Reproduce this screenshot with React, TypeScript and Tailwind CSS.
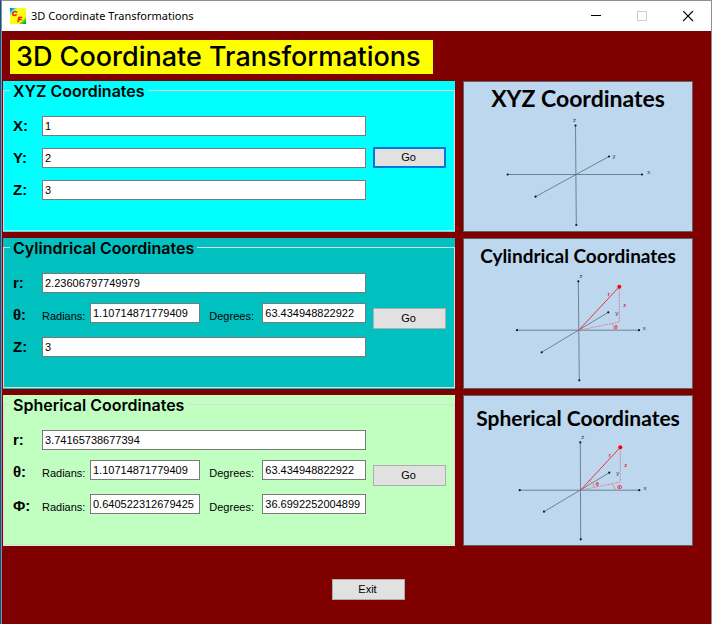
import { useId, useState } from 'react';
import type { ReactNode } from 'react';
import clsx from 'clsx';

type Point = [number, number];

interface ButtonProps {
  children: ReactNode;
  focused?: boolean;
  className?: string;
  onClick?: () => void;
}

function Button({ children, focused = false, className, onClick }: ButtonProps) {
  return (
    <button
      type="button"
      onClick={onClick}
      className={clsx(
        'h-[21px] w-[73px] shrink-0 bg-[#e1e1e1] pr-0.5 text-[11px] leading-none',
        focused ? 'border-2 border-[#0078d7]' : 'border border-[#adadad]',
        className
      )}
    >
      {children}
    </button>
  );
}

interface FieldProps {
  label: string;
  value: string;
  onChange: (value: string) => void;
}

const inputClass = 'h-5 min-w-0 border border-[#7a7a7a] bg-white px-0.5 pb-px text-[11px] leading-none outline-none';
const nameClass = 'w-[29px] shrink-0 text-[15px] leading-5 font-bold';

/** Bold axis name followed by one full-width box. */
function Field({ label, value, onChange }: FieldProps) {
  const id = useId();
  return (
    <div className="flex items-center">
      <label htmlFor={id} className={nameClass}>
        {label}
      </label>
      <input id={id} className={clsx(inputClass, 'flex-1')} value={value} onChange={(e) => onChange(e.target.value)} />
    </div>
  );
}

interface AngleProps {
  label: string;
  radians: string;
  degrees: string;
}

/** Angle row, shown both in radians and in degrees. */
function AngleField({ label, radians, degrees }: AngleProps) {
  const id = useId();
  const [rad, setRad] = useState(radians);
  const [deg, setDeg] = useState(degrees);

  return (
    <div className="flex h-6 items-center text-[11px]">
      <span className={nameClass}>{label}</span>
      <label htmlFor={`${id}-rad`} className="w-12 shrink-0 pt-0.5">
        Radians:
      </label>
      <input
        id={`${id}-rad`}
        className={clsx(inputClass, 'flex-[110] self-start')}
        value={rad}
        onChange={(e) => setRad(e.target.value)}
      />
      <label htmlFor={`${id}-deg`} className="ml-[9px] w-[53px] shrink-0 pt-0.5">
        Degrees:
      </label>
      <input
        id={`${id}-deg`}
        className={clsx(inputClass, 'flex-[103] self-start')}
        value={deg}
        onChange={(e) => setDeg(e.target.value)}
      />
    </div>
  );
}

interface PanelProps {
  title: string;
  color: string;
  children: ReactNode;
  action: ReactNode;
  gap: string;
}

function Panel({ title, color, children, action, gap }: PanelProps) {
  return (
    <section className={clsx('pb-px', color)}>
      <fieldset className="h-[150px] min-w-0 border border-[#dcdcdc] pr-2 pl-[9px]">
        <legend className="-ml-[3px] px-[3px] pt-0.5 font-['Inter',sans-serif] text-[16px] leading-[17px] font-semibold">
          {title}
        </legend>
        <div className="flex items-start gap-[7px] pt-4">
          <div className={clsx('flex min-w-0 flex-1 flex-col', gap)}>{children}</div>
          {action}
        </div>
      </fieldset>
    </section>
  );
}

interface DiagramProps {
  title: string;
  titleClass: string;
  children: ReactNode;
}

function Diagram({ title, titleClass, children }: DiagramProps) {
  return (
    <figure className="flex h-[151px] flex-col border border-[#5f6468] bg-[#bdd7ee]">
      <figcaption
        className={clsx("h-[35px] text-center font-['Lato',sans-serif] font-bold whitespace-nowrap", titleClass)}
      >
        {title}
      </figcaption>
      <svg viewBox="0 35 228 114" className="min-h-0 flex-1" fontFamily="Liberation Sans, sans-serif" fontSize="6">
        {children}
      </svg>
    </figure>
  );
}

function Axis({ from, to }: { from: Point; to: Point }) {
  return (
    <g>
      <line x1={from[0]} y1={from[1]} x2={to[0]} y2={to[1]} stroke="#5c6c78" strokeWidth="0.8" />
      <circle cx={from[0]} cy={from[1]} r="1.1" fill="#101418" />
      <circle cx={to[0]} cy={to[1]} r="1.1" fill="#101418" />
    </g>
  );
}

function Mark({ at, red = false, children }: { at: Point; red?: boolean; children: string }) {
  return (
    <text x={at[0]} y={at[1] + 2} textAnchor="middle" fill={red ? '#e8303c' : '#28323a'} fontWeight={red ? 700 : 400}>
      {children}
    </text>
  );
}

/** Radius line to the point, with its dashed projection onto the xy plane. */
function Vector({ origin, tip, foot }: { origin: Point; tip: Point; foot: Point }) {
  return (
    <g fill="none">
      <line x1={origin[0]} y1={origin[1]} x2={tip[0]} y2={tip[1]} stroke="#f0303a" strokeWidth="1" />
      <path
        d={`M${origin[0]} ${origin[1]}L${foot[0]} ${foot[1]}L${tip[0]} ${tip[1]}`}
        stroke="#e07484"
        strokeWidth="0.8"
        strokeDasharray="2 0.8"
      />
      <circle cx={tip[0]} cy={tip[1]} r="2" fill="#f00" />
    </g>
  );
}

function AppIcon() {
  return (
    <svg width="16" height="16" viewBox="0 0 16 16" aria-hidden="true">
      <defs>
        <linearGradient id="icon-bg" x1="0" y1="0" x2="1" y2="1">
          <stop offset="0" stopColor="#0040e0" />
          <stop offset="0.1" stopColor="#10a0f0" />
          <stop offset="0.19" stopColor="#70f0b0" />
          <stop offset="0.27" stopColor="#ffff20" />
          <stop offset="0.76" stopColor="#fff800" />
          <stop offset="0.84" stopColor="#50d020" />
          <stop offset="1" stopColor="#008838" />
        </linearGradient>
      </defs>
      <rect width="16" height="16" fill="url(#icon-bg)" />
      <g
        fill="#f01010"
        stroke="#f01010"
        strokeWidth="0.5"
        fontFamily="Liberation Sans, sans-serif"
        fontWeight="700"
        fontStyle="italic"
        fontSize="7"
      >
        <text x="2" y="7.5">
          C
        </text>
        <text x="7.5" y="14">
          F
        </text>
      </g>
    </svg>
  );
}

function TitleBar() {
  return (
    <header className="flex h-[30px] items-center bg-white pl-2">
      <AppIcon />
      <span className="ml-[5px] flex-1 truncate font-['Noto_Sans',sans-serif] text-[11px]">
        3D Coordinate Transformations
      </span>
      <button type="button" aria-label="Minimize" className="grid h-full w-[45px] place-items-center">
        <svg width="11" height="11" stroke="#000" shapeRendering="crispEdges">
          <path d="M0 4.5H10" />
        </svg>
      </button>
      <button type="button" aria-label="Maximize" disabled className="grid h-full w-[46px] place-items-center">
        <svg width="10" height="10" fill="none" stroke="#ccc" shapeRendering="crispEdges">
          <path d="M.5 .5h9v9h-9z" />
        </svg>
      </button>
      <button type="button" aria-label="Close" className="grid h-full w-[46px] place-items-center">
        <svg width="11" height="11" stroke="#000" strokeWidth="1.2">
          <path d="M0 0l10 10M10 0l-10 10" />
        </svg>
      </button>
    </header>
  );
}

export default function App() {
  const [xyz, setXyz] = useState({ x: '1', y: '2', z: '3' });
  const [cylindrical, setCylindrical] = useState({ r: '2.23606797749979', z: '3' });
  const [radius, setRadius] = useState('3.74165738677394');

  return (
    <div className="min-h-screen border-l border-[#0f4f94] bg-[#800000] font-['Liberation_Sans',Arial,sans-serif] text-black">
      <div className="min-h-screen border-x border-t border-[#8f8f8f]">
        <TitleBar />

        <main className="pt-[9px] pb-6">
          <h1 className="ml-2 inline-block bg-[#ffff00] pr-3 pl-1.5 font-['Inter',sans-serif] text-[27px] leading-[34px] font-medium whitespace-nowrap">
            3D Coordinate Transformations
          </h1>

          <div className="mt-[7px] grid grid-cols-[minmax(0,1fr)_230px] gap-x-2 gap-y-1.5 pr-[18px] pl-px">
            <Panel
              title="XYZ Coordinates"
              color="bg-[#00ffff]"
              gap="gap-3"
              action={
                <Button focused className="mt-[31px]">
                  Go
                </Button>
              }
            >
              <Field label="X:" value={xyz.x} onChange={(x) => setXyz({ ...xyz, x })} />
              <Field label="Y:" value={xyz.y} onChange={(y) => setXyz({ ...xyz, y })} />
              <Field label="Z:" value={xyz.z} onChange={(z) => setXyz({ ...xyz, z })} />
            </Panel>
            <Diagram title="XYZ Coordinates" titleClass="text-[23px] leading-[33px]">
              <Axis from={[111.5, 43.5]} to={[112.3, 143]} />
              <Axis from={[43.7, 92.5]} to={[178, 92.5]} />
              <Axis from={[71.5, 114.7]} to={[145, 74.5]} />
              <Mark at={[110.5, 37.5]}>z</Mark>
              <Mark at={[150, 73.5]}>y</Mark>
              <Mark at={[184.7, 90]}>x</Mark>
            </Diagram>

            <Panel
              title="Cylindrical Coordinates"
              color="bg-[#00c0c0]"
              gap="gap-2.5"
              action={<Button className="mt-[35px]">Go</Button>}
            >
              <Field label="r:" value={cylindrical.r} onChange={(r) => setCylindrical({ ...cylindrical, r })} />
              <AngleField label="θ:" radians="1.10714871779409" degrees="63.434948822922" />
              <Field label="Z:" value={cylindrical.z} onChange={(z) => setCylindrical({ ...cylindrical, z })} />
            </Panel>
            <Diagram title="Cylindrical Coordinates" titleClass="text-[19px] leading-[33px]">
              <Axis from={[114.3, 42.3]} to={[115.3, 141.3]} />
              <Axis from={[53, 91.2]} to={[175, 91.2]} />
              <Axis from={[77.7, 113.3]} to={[144.3, 73.3]} />
              <Vector origin={[114.7, 91.3]} tip={[155.3, 47.7]} foot={[155.3, 83]} />
              <path d="M147.7 84Q150.5 87 150.3 91.3" fill="none" stroke="#e07484" strokeWidth="0.8" />
              <Mark at={[117, 37]}>z</Mark>
              <Mark at={[152.7, 74]}>y</Mark>
              <Mark at={[180.3, 88.5]}>x</Mark>
              <Mark at={[145, 55]} red>r</Mark>
              <Mark at={[160.7, 65.5]} red>z</Mark>
              <Mark at={[152.2, 88]} red>θ</Mark>
            </Diagram>

            <Panel
              title="Spherical Coordinates"
              color="bg-[#c0ffc0]"
              gap="gap-2.5"
              action={<Button className="mt-[35px]">Go</Button>}
            >
              <Field label="r:" value={radius} onChange={setRadius} />
              <AngleField label="θ:" radians="1.10714871779409" degrees="63.434948822922" />
              <AngleField label="Φ:" radians="0.640522312679425" degrees="36.6992252004899" />
            </Panel>
            <Diagram title="Spherical Coordinates" titleClass="text-[21px] leading-[43px]">
              <Axis from={[116.3, 46.3]} to={[116.7, 143.3]} />
              <Axis from={[55.7, 94.2]} to={[175.3, 94.2]} />
              <Axis from={[80, 115.7]} to={[145.3, 76.7]} />
              <Vector origin={[116.5, 94.2]} tip={[156.3, 51.3]} foot={[156.3, 86]} />
              <path
                d="M126 84.7Q130 87 130.3 91.7M147.3 87.7Q151 90 151.3 94.3"
                fill="none"
                stroke="#e07484"
                strokeWidth="0.8"
              />
              <Mark at={[118.7, 41]}>z</Mark>
              <Mark at={[153.7, 77]}>y</Mark>
              <Mark at={[181, 92]}>x</Mark>
              <Mark at={[146, 58.5]} red>r</Mark>
              <Mark at={[161.7, 69.3]} red>z</Mark>
              <Mark at={[133.3, 87.7]} red>θ</Mark>
              <Mark at={[155.7, 90.7]} red>Φ</Mark>
            </Diagram>
          </div>

          <div className="mt-[33px] flex justify-center pl-6">
            <Button>Exit</Button>
          </div>
        </main>
      </div>
    </div>
  );
}
